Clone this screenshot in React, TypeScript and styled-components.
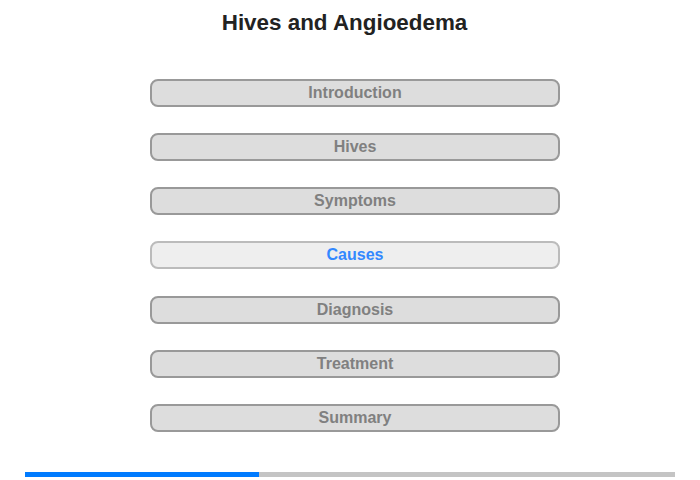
import React from "react";
import styled, { createGlobalStyle } from "styled-components";

const Global = createGlobalStyle`
  html, body { margin: 0; padding: 0; background: #fff; }
  body { font-family: "Liberation Sans", Arial, sans-serif; }
`;

const Page = styled.div`
  width: 700px;
  height: 480px;
  display: flex;
  flex-direction: column;
  overflow: hidden;
`;

const Title = styled.h1`
  margin: 0;
  padding-top: 11px;
  padding-right: 11px;
  height: 24px;
  font-size: 22.4px;
  line-height: 24px;
  font-weight: bold;
  color: #222;
  text-align: center;
`;

const Menu = styled.nav`
  display: flex;
  flex-direction: column;
  gap: 26.17px;
  padding-left: 150px;
  margin-top: 44px;
`;

const MenuButton = styled.div<{ $active?: boolean }>`
  box-sizing: border-box;
  width: 410px;
  height: 28px;
  border: 2px solid ${(p) => (p.$active ? "#bbbbbb" : "#999999")};
  border-radius: 8px;
  background: ${(p) => (p.$active ? "#eeeeee" : "#dddddd")};
  color: ${(p) => (p.$active ? "#3388ff" : "#808080")};
  font-size: 16px;
  font-weight: bold;
  display: flex;
  align-items: center;
  justify-content: center;
`;

const Progress = styled.div`
  margin: 40px 0 0 25px;
  width: 650px;
  height: 5px;
  background: #c4c4c4;
  display: flex;
`;

const ProgressFill = styled.div`
  height: 100%;
  background: #007bff;
`;

const items = ["Introduction", "Hives", "Symptoms", "Causes", "Diagnosis", "Treatment", "Summary"];
const active = 3;

export default function App() {
  return (
    <Page>
      <Global />
      <Title>Hives and Angioedema</Title>
      <Menu>
        {items.map((t, i) => (
          <MenuButton key={t} $active={i === active}>
            {t}
          </MenuButton>
        ))}
      </Menu>
      <Progress>
        <ProgressFill style={{ width: `${(234 / 650) * 100}%` }} />
      </Progress>
    </Page>
  );
}
